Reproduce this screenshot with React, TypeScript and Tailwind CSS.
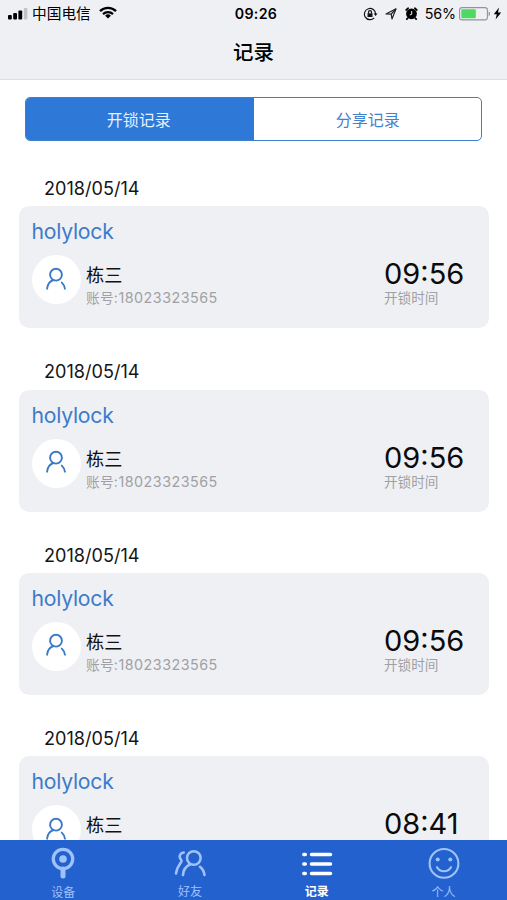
import type { ReactNode } from 'react'

interface LockRecord {
    id: number
    date: string
    lock: string
    name: string
    account: string
    time: string
}

const records: LockRecord[] = [
    { id: 1, date: '2018/05/14', lock: 'holylock', name: '栋三', account: '18023323565', time: '09:56' },
    { id: 2, date: '2018/05/14', lock: 'holylock', name: '栋三', account: '18023323565', time: '09:56' },
    { id: 3, date: '2018/05/14', lock: 'holylock', name: '栋三', account: '18023323565', time: '09:56' },
    { id: 4, date: '2018/05/14', lock: 'holylock', name: '栋三', account: '18023323565', time: '08:41' },
]

function StatusBar() {
    return (
        <div className="grid h-[27px] grid-cols-[1fr_auto_1fr] items-center pl-2 pr-[5px]">
            <div className="flex items-center">
                <svg width="20" height="12" viewBox="0 0 20 12">
                    <rect x="0" y="7" width="3.8" height="4.5" rx="1" />
                    <rect x="5.2" y="5" width="3.8" height="6.5" rx="1" />
                    <rect x="10.4" y="2.5" width="3.8" height="9" rx="1" />
                    <rect x="15.8" y="0" width="3.6" height="11.5" rx="1" fill="#c3c3c6" />
                </svg>
                <span className="ml-1 text-[14.7px] leading-5">中国电信</span>
                <svg className="-mt-0.5 ml-2" width="18" height="13" viewBox="0 0 18 13" fill="none" stroke="#000" strokeWidth="2.3">
                    <path d="M1 5.1a11.4 11.4 0 0 1 16 0" />
                    <path d="M4 8.1a7.1 7.1 0 0 1 10 0" />
                    <path d="M9 12.6 6.1 9.8a4.1 4.1 0 0 1 5.8 0Z" fill="#000" stroke="none" />
                </svg>
            </div>
            <span className="pl-[2px] text-[14.2px] font-semibold tracking-[0.3px]">09:26</span>
            <div className="flex items-center justify-end">
                {/* Rotation lock */}
                <svg width="15" height="14" viewBox="0 0 15 14" fill="none" stroke="#111" strokeWidth="1.2">
                    <path d="M11.2 10.8A5.6 5.6 0 1 1 12.6 7" />
                    <path d="M10.7 6.6h3.8l-1.9 2.5Z" fill="#111" stroke="none" />
                    <rect x="4.5" y="6.3" width="5" height="3.7" fill="#111" stroke="none" />
                    <path d="M5.5 6.5V5.2a1.5 1.5 0 0 1 3 0v1.3" />
                </svg>
                {/* Location */}
                <svg className="ml-[7px]" width="12" height="12" viewBox="0 0 12 12" fill="none" stroke="#222" strokeWidth="1.2" strokeLinejoin="round">
                    <path d="M1 6 11 .8 7 11 6.2 6.2Z" />
                    <path d="M6.2 6 11 1" />
                </svg>
                {/* Alarm */}
                <svg className="ml-[8px]" width="13" height="13" viewBox="0 0 13 13">
                    <circle cx="6.5" cy="6.8" r="5.4" />
                    <path d="M1.2 3 3.2 1.2M11.8 3 9.8 1.2M2.8 11.2l-1 1M10.2 11.2l1 1" stroke="#000" strokeWidth="1.7" strokeLinecap="round" />
                    <path d="M6.7 4v3.3L4.8 8" fill="none" stroke="#eff0f4" strokeWidth="1" />
                </svg>
                <span className="ml-[7px] text-[14.3px] tracking-[-0.1px]">56%</span>
                <svg className="ml-[3px]" width="32" height="14" viewBox="0 0 32 14">
                    <rect x=".6" y=".6" width="27.8" height="12.3" rx="2.5" fill="none" stroke="#929496" strokeWidth="1.1" />
                    <rect x="2.3" y="2.3" width="14.5" height="9" rx="1" fill="#4cd964" />
                    <path d="M29.6 4.5c2 .7 2 4 0 4.7Z" fill="#929496" />
                </svg>
                <svg className="ml-0.5" width="9" height="13" viewBox="0 0 9 13">
                    <path d="M6 .6 .8 7.2h3L2.6 12.4 8.2 5.5H5Z" />
                </svg>
            </div>
        </div>
    )
}

function RecordItem({ record }: { record: LockRecord }) {
    return (
        <section className="h-[183.33px] shrink-0 pl-[19px] pr-[18px]">
            <h2 className="h-[61.33px] pl-[25px] pt-8 text-[18.1px] leading-[22px] text-[#151515]">{record.date}</h2>
            <div className="h-[122px] rounded-[10px] bg-[#eff0f4] pl-[12.5px] pt-[11px]">
                <h3 className="text-[21.2px] leading-7 tracking-[-0.25px] text-[#3d7cca]">{record.lock}</h3>
                <div className="mt-[10px] flex items-start">
                    <div className="flex size-[49px] items-center justify-center rounded-full bg-white">
                        <svg className="-mt-0.5" width="22" height="24" viewBox="0 0 22 24" fill="none" stroke="#3b79c8" strokeWidth="1.9" strokeLinecap="round">
                            <circle cx="11" cy="7.7" r="5.9" />
                            <path d="M8.3 13C4.6 14.3 2.5 17.3 2.1 21.7" />
                            <path d="M16.8 15.6c1.7 1.5 2.7 3.4 3.1 6.1" />
                        </svg>
                    </div>
                    <div className="ml-[5.5px] flex-1 pt-[7px]">
                        <p className="text-[18.2px] leading-[26px] text-[#111]">{record.name}</p>
                        <p className="text-[14.3px] leading-5 tracking-[0.5px] text-[#a0a1a4]"><span className="text-[13.8px] tracking-[0.1px]">账号</span>:{record.account}</p>
                    </div>
                    <div className="w-[105px] pt-[4px]">
                        <p className="text-[29px] leading-[29px] text-[#0b0b0b]">{record.time}</p>
                        <p className="text-[13.6px] leading-5 text-[#a0a1a4]">开锁时间</p>
                    </div>
                </div>
            </div>
        </section>
    )
}

function TabItem({ label, active = false, children }: { label: string; active?: boolean; children: ReactNode }) {
    return (
        <button className={active ? 'flex flex-1 flex-col items-center text-white' : 'flex flex-1 flex-col items-center text-[#9fc2fa]'}>
            <span className="mt-[7px] flex h-8 items-center">{children}</span>
            <span className={active ? 'mt-1.5 text-[12px] font-bold leading-4' : 'mt-1.5 text-[12px] leading-4'}>{label}</span>
        </button>
    )
}

function TabBar() {
    return (
        <nav className="flex h-[60px] shrink-0 bg-[#2361cf]">
            <TabItem label="设备">
                <svg width="24" height="32" viewBox="0 0 24 32" fill="none" stroke="currentColor">
                    <circle cx="12" cy="12" r="9.7" strokeWidth="3.3" />
                    <circle cx="12" cy="12" r="3.8" fill="currentColor" stroke="none" />
                    <path d="M12 22v7" strokeWidth="5" strokeLinecap="round" />
                </svg>
            </TabItem>
            <TabItem label="好友">
                <svg width="32" height="28" viewBox="0 0 32 28" fill="none" stroke="currentColor" strokeWidth="2.6" strokeLinecap="round" strokeLinejoin="round">
                    <circle cx="19.8" cy="9" r="6.8" />
                    <path d="M16.5 15.3C12 17.2 9.3 20.8 9 26" />
                    <path d="M26 17.8c2.6 2 4 4.7 4.5 8.2" />
                    <path d="M9.8 3.5C6.5 4 5 6.5 6 9c.5 1.3 1.5 1.7 1.5 3C7.5 14 3 16.3 2 24.5" />
                </svg>
            </TabItem>
            <TabItem label="记录" active>
                <svg className="mt-0.5" width="32" height="24" viewBox="0 0 32 24" stroke="currentColor" strokeWidth="3.5" strokeLinecap="round">
                    <path d="M2.8 2.6h1.5M10.5 2.6h19M2.8 12h1.5M10.5 12h19M2.8 21.4h1.5M10.5 21.4h19" />
                </svg>
            </TabItem>
            <TabItem label="个人">
                <svg width="32" height="32" viewBox="0 0 32 32" fill="none" stroke="currentColor" strokeWidth="2.1" strokeLinecap="round">
                    <circle cx="16" cy="16.4" r="14.4" />
                    <circle cx="9.7" cy="12.4" r="2" fill="currentColor" stroke="none" />
                    <circle cx="22.3" cy="12.4" r="2" fill="currentColor" stroke="none" />
                    <path d="M9 20.2c3 5.3 11 5.3 14 0" />
                </svg>
            </TabItem>
        </nav>
    )
}

export default function App() {
    return (
        <div className="flex h-[900px] w-[507px] flex-col overflow-hidden bg-white font-['Inter','Noto_Sans_CJK_SC',sans-serif] text-black">
            <header className="h-20 shrink-0 border-b border-[#dcdddf] bg-[#eff0f4]">
                <StatusBar />
                <h1 className="mt-[12px] text-center text-[20.5px] font-medium leading-7">记录</h1>
            </header>

            <main className="flex min-h-0 flex-1 flex-col overflow-hidden">
                <div className="mx-[25px] mt-[17px] flex h-11 shrink-0 overflow-hidden rounded-[5px] border-[1.5px] border-[#3f7fc9] text-[16px]">
                    <button className="w-1/2 bg-[#2e78d7] pr-[2px] pt-px text-[#e6f1ff]">开锁记录</button>
                    <button className="w-1/2 pl-px pt-px text-[#4582cd]">分享记录</button>
                </div>
                <div className="mt-1 flex flex-col">
                    {records.map((record) => (
                        <RecordItem key={record.id} record={record} />
                    ))}
                </div>
            </main>

            <TabBar />
        </div>
    )
}
